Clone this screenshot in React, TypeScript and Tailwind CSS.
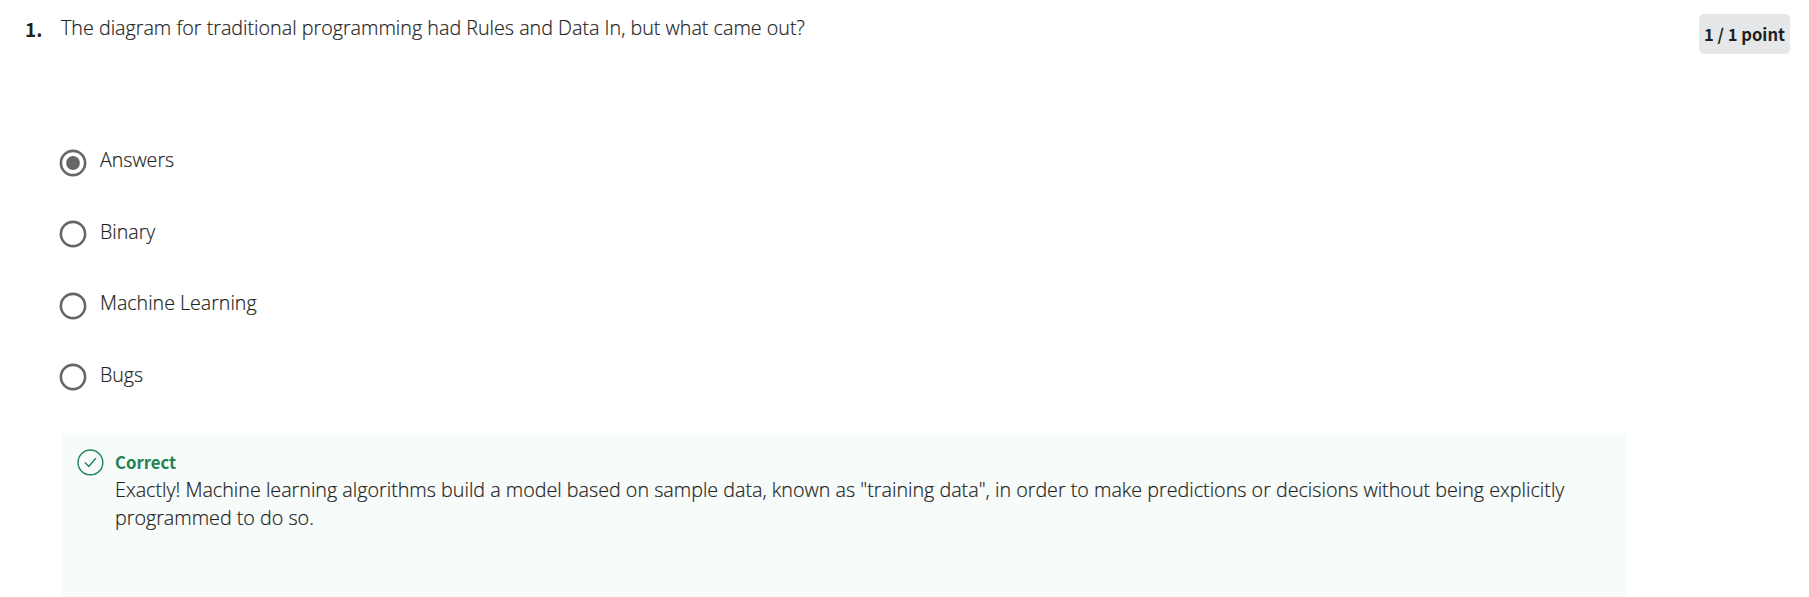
const options = ["Answers", "Binary", "Machine Learning", "Bugs"];

function Radio({ checked }: { checked: boolean }) {
  return (
    <svg width="28" height="28" viewBox="0 0 28 28" className="shrink-0">
      <circle cx="14" cy="14" r="12.1" fill="none" stroke="#666666" strokeWidth="2.6" />
      {checked && <circle cx="14" cy="14" r="6.9" fill="#666666" />}
    </svg>
  );
}

export default function App() {
  return (
    <main className="h-[597px] w-[1809px] overflow-hidden bg-white font-['Open_Sans',sans-serif] text-[19.72px] leading-7 font-light text-[#1f1f1f]">
      <div className="flex h-[146px] items-start pt-[14px] pr-[19px] pl-[25px]">
        <span className="w-[36px] pt-px font-['Noto_Sans_CJK_SC',sans-serif] text-[19px] font-bold">1.</span>
        <p className="flex-1 [-webkit-text-stroke:0.2px]">The diagram for traditional programming had Rules and Data In, but what came out?</p>
        <span className="flex h-10 w-[91px] items-center justify-center rounded-[5px] bg-[#e5e7e8] font-['Noto_Sans_CJK_SC',sans-serif] text-[16.6px] font-bold whitespace-nowrap">1 / 1 point</span>
      </div>
      <div className="flex h-[287px] flex-col gap-[43.4px] pl-[59px]">
        {options.map((o, i) => (
          <label key={o} className="flex h-7 items-start gap-[13px]">
            <span className="pt-[3px]"><Radio checked={i === 0} /></span>
            <span className="pt-[0.4px] text-[19.6px] [-webkit-text-stroke:0.2px]">{o}</span>
          </label>
        ))}
      </div>
      <section className="ml-[61px] flex h-[164px] w-[1566px] bg-[#f7fbf9] pt-[15px] pl-[15px]">
        <svg width="28" height="28" viewBox="0 0 28 28" fill="none" stroke="#1f8354" strokeWidth="1.4" className="shrink-0">
          <circle cx="14.4" cy="14.4" r="12.4" />
          <path d="M9 14.4l3.8 4 7-8.2" />
        </svg>
        <div className="ml-[11px]">
          <div className="font-['Noto_Sans_CJK_SC',sans-serif] text-[16.7px] font-bold text-[#1f8354]">Correct</div>
          <p className="w-[1470px] [-webkit-text-stroke:0.2px]">Exactly! Machine learning algorithms build a model based on sample data, known as "training data", in order to make predictions or decisions without being explicitly programmed to do so.</p>
        </div>
      </section>
    </main>
  );
}
